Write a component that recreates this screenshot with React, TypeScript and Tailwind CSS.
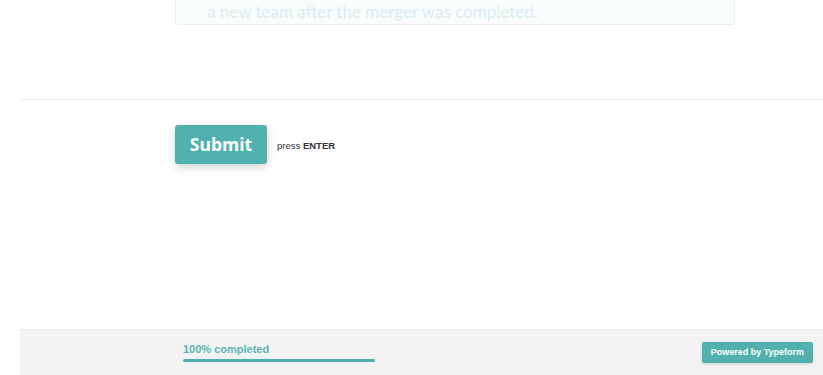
export default function App() {
  return (
    <div className="h-[375px] w-[823px] overflow-hidden bg-white font-['Liberation_Sans',Arial,sans-serif]">
      <div className="ml-[20px] flex h-full flex-col">
        <div className="h-[100px] border-b border-[#ebebeb] pl-[155px]">
          <div className="-mt-[13px] w-[560px] rounded-[3px] border border-[#e6f3f2] bg-[#fafdfd] pb-[0px] pl-[31px] pt-[12px] font-['Lato',sans-serif] text-[17px] leading-[24px] text-[#d9eeec]">
            a new team after the merger was completed.
          </div>
        </div>
        <div className="flex flex-1 items-start pl-[155px] pt-[25px]">
          <div className="flex items-center">
            <button className="h-[39px] w-[92px] rounded-[3px] bg-[#50b1ae] font-['Open_Sans',sans-serif] text-[17.5px] font-bold text-white shadow-[0_3px_8px_rgba(0,0,0,0.18)]">
              Submit
            </button>
            <span className="ml-[10px] mt-[3px] text-[9.5px] text-[#333]">
              press <b>ENTER</b>
            </span>
          </div>
        </div>
        <div className="flex h-[46px] items-start border-t border-[#e8e8e8] bg-[#f3f3f3]">
          <div className="ml-[163px] mt-[13px] w-[192px]">
            <div className="text-[11px] font-bold leading-[13px] text-[#5ab5b1]">100% completed</div>
            <div className="mt-[3px] h-[3px] w-full rounded-full bg-[#4fb1ad]" />
          </div>
          <div className="ml-auto mr-[10px] mt-[12px] flex h-[21px] items-center rounded-[2px] bg-[#50b1ae] px-[9px] text-[9px] font-bold text-white shadow-[0_1px_3px_rgba(0,0,0,0.15)]">
            Powered by Typeform
          </div>
        </div>
      </div>
    </div>
  )
}
